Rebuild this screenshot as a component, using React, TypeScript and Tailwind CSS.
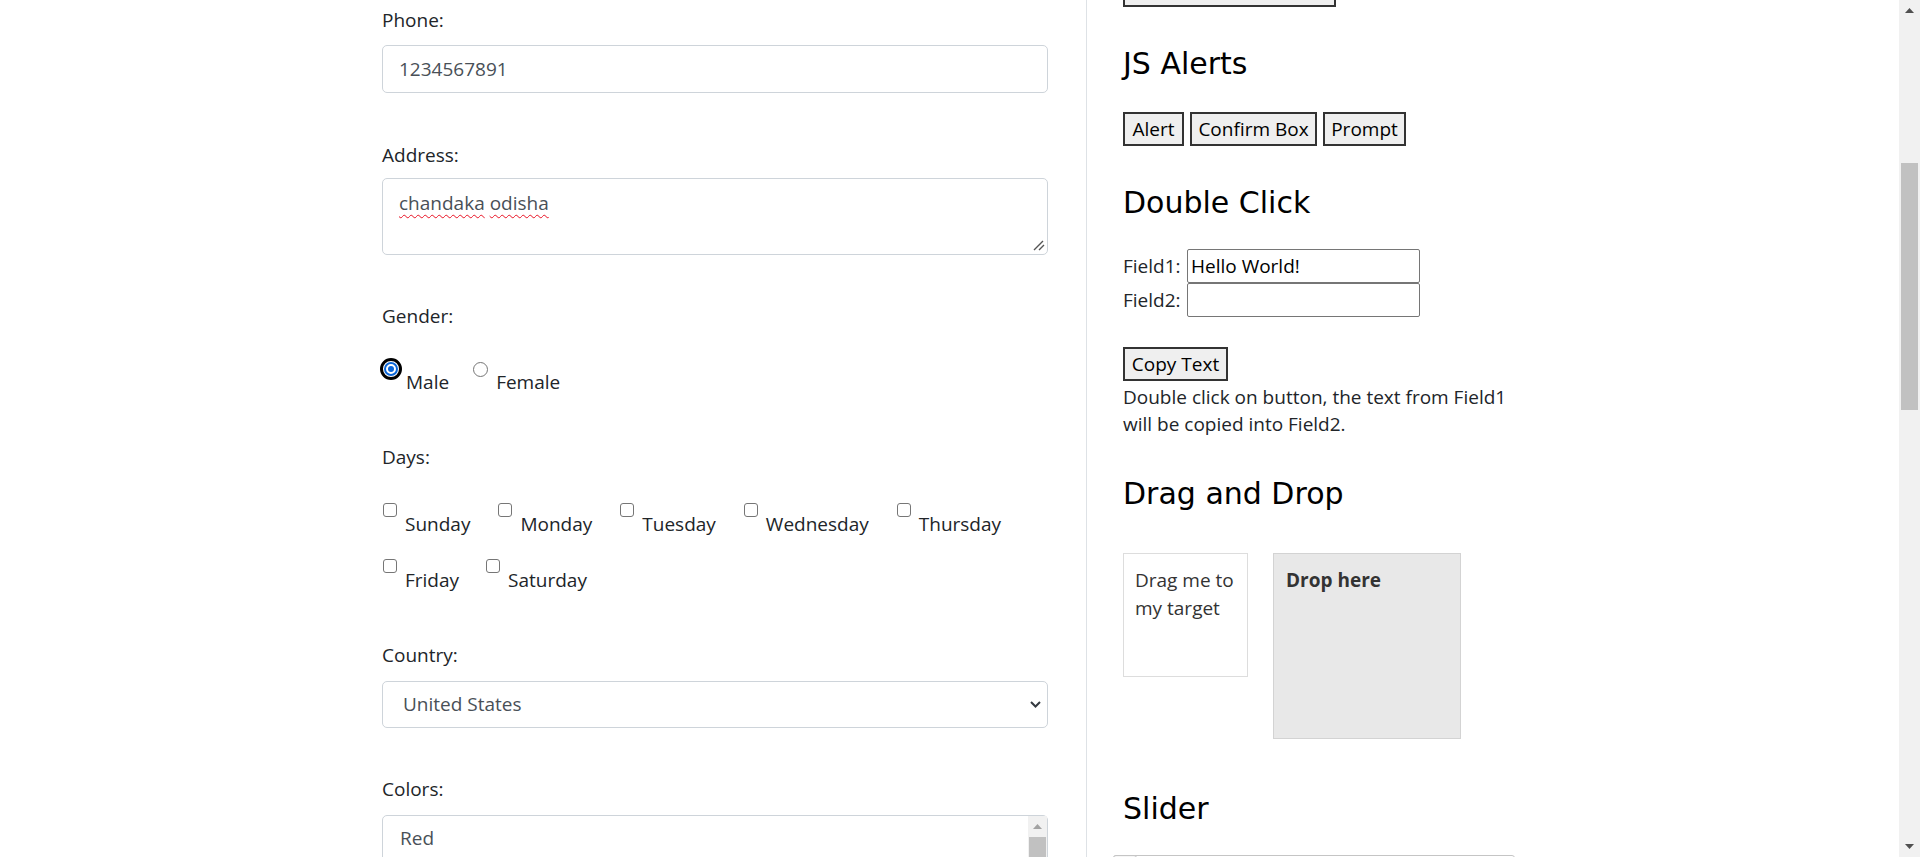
import React from 'react';

const sans = "font-['Segoe_UI','Open_Sans',sans-serif]";
const heading = "font-['DejaVu_Sans',Verdana,sans-serif] text-[30px] leading-[36px] text-black";

function Label({ children, className = '' }: { children: React.ReactNode; className?: string }) {
  return <div className={`text-[19px] leading-[30px] text-[#212529] ${className}`}>{children}</div>;
}

function CheckItem({ label }: { label: string }) {
  return (
    <div className="flex items-start">
      <span className="ml-[1px] h-[14px] w-[14px] rounded-[3px] border border-[#767676] bg-white" />
      <span className="ml-[8px] mt-[6px] text-[19px] leading-[30px] text-[#212529]">{label}</span>
    </div>
  );
}

function LeftForm() {
  return (
    <div className="w-[1086px] shrink-0 pl-[382px] pr-[38px] pt-[5px]">
      {/* Phone */}
      <Label>Phone:</Label>
      <div className="mt-[10px] flex h-[48px] items-center rounded-[5px] border border-[#ced4da] px-[16px] text-[19px] text-[#495057]">
        1234567891
      </div>

      {/* Address */}
      <Label className="mt-[47px]">Address:</Label>
      <div className="relative mt-[8px] h-[77px] rounded-[5px] border border-[#ced4da] px-[16px] pt-[9px] text-[19px] leading-[30px] text-[#495057]">
        <span className="underline decoration-[#e81123] decoration-wavy decoration-1 underline-offset-[4px]">chandaka</span>{' '}
        <span className="underline decoration-[#e81123] decoration-wavy decoration-1 underline-offset-[4px]">odisha</span>
        <svg className="absolute bottom-[3px] right-[2px]" width="12" height="11" viewBox="0 0 12 11">
          <path d="M1 10 L10 1 M6 10 L11 5" stroke="#555" strokeWidth="1.4" fill="none" />
        </svg>
      </div>

      {/* Gender */}
      <Label className="mt-[46px]">Gender:</Label>
      <div className="mt-[27px] flex items-start">
        <div className="flex items-start">
          <span className="-ml-[2px] flex h-[22px] w-[22px] items-center justify-center rounded-full border-[3px] border-black bg-white">
            <span className="flex h-[14px] w-[14px] items-center justify-center rounded-full border-2 border-[#0a66d8] bg-white">
              <span className="h-[6px] w-[6px] rounded-full bg-[#0a66d8]" />
            </span>
          </span>
          <span className="ml-[4px] mt-[9px] text-[19px] leading-[30px] text-[#212529]">Male</span>
        </div>
        <div className="ml-[24px] flex items-start">
          <span className="mt-[4px] h-[15px] w-[15px] rounded-full border border-[#767676] bg-white" />
          <span className="ml-[8px] mt-[9px] text-[19px] leading-[30px] text-[#212529]">Female</span>
        </div>
      </div>

      {/* Days */}
      <Label className="mt-[45px]">Days:</Label>
      <div className="mt-[31px] flex gap-x-[27px]">
        <CheckItem label="Sunday" />
        <CheckItem label="Monday" />
        <CheckItem label="Tuesday" />
        <CheckItem label="Wednesday" />
        <CheckItem label="Thursday" />
      </div>
      <div className="mt-[20px] flex gap-x-[26px]">
        <CheckItem label="Friday" />
        <CheckItem label="Saturday" />
      </div>

      {/* Country */}
      <Label className="mt-[45px]">Country:</Label>
      <div className="mt-[11px] flex h-[47px] items-center justify-between rounded-[5px] border border-[#ced4da] pl-[20px] pr-[6px] text-[19px] text-[#495057]">
        <span>United States</span>
        <svg width="11" height="7" viewBox="0 0 11 7">
          <path d="M1 1 L5.5 5.5 L10 1" stroke="#343a40" strokeWidth="2" fill="none" />
        </svg>
      </div>

      {/* Colors */}
      <Label className="mt-[46px]">Colors:</Label>
      <div className="mt-[11px] flex h-[140px] rounded-t-[5px] border border-[#ced4da]">
        <div className="flex-1 pl-[17px] pt-[7px] text-[19px] leading-[30px] text-[#495057]">Red</div>
        <div className="flex w-[19px] flex-col bg-[#f1f1f1]">
          <div className="flex h-[21px] items-center justify-center">
            <svg width="9" height="5" viewBox="0 0 9 5">
              <path d="M0 5 L4.5 0 L9 5 Z" fill="#a3a3a3" />
            </svg>
          </div>
          <div className="mx-[1px] h-[80px] bg-[#c1c1c1]" />
        </div>
      </div>
    </div>
  );
}

function OldButton({ children, className = '' }: { children?: React.ReactNode; className?: string }) {
  return (
    <button
      type="button"
      className={`flex h-[34px] items-center justify-center border-2 border-[#333] bg-[#efefef] text-[19px] text-black ${className}`}
    >
      {children}
    </button>
  );
}

function RightPanel() {
  return (
    <div className="flex-1 border-l border-[#dee2e6] pl-[36px]">
      <OldButton className="-mt-[27px] w-[213px]" />

      <h2 className={`mt-[39px] ${heading}`}>JS Alerts</h2>
      <div className="mt-[30px] flex gap-[6px]">
        <OldButton className="w-[61px]">Alert</OldButton>
        <OldButton className="w-[127px]">Confirm Box</OldButton>
        <OldButton className="w-[83px]">Prompt</OldButton>
      </div>

      <h2 className={`mt-[39px] ${heading}`}>Double Click</h2>
      <div className="mt-[28px] flex flex-col">
        <div className="flex items-center">
          <span className="w-[64px] text-[19px] text-[#212529]">Field1:</span>
          <div className="flex h-[34px] w-[233px] items-center rounded-[2px] border border-[#767676] px-[3px] text-[19px] text-black">
            Hello World!
          </div>
        </div>
        <div className="flex items-center">
          <span className="w-[64px] text-[19px] text-[#212529]">Field2:</span>
          <div className="h-[34px] w-[233px] rounded-[2px] border border-[#767676]" />
        </div>
      </div>
      <OldButton className="mt-[30px] w-[105px]">Copy Text</OldButton>
      <p className="mt-[3px] whitespace-nowrap text-[19px] leading-[27px] text-[#212529]">
        Double click on button, the text from Field1
        <br />
        will be copied into Field2.
      </p>

      <h2 className={`mt-[38px] ${heading}`}>Drag and Drop</h2>
      <div className="mt-[41px] flex items-start gap-[25px]">
        <div className="h-[124px] w-[125px] border border-[#dddddd] pl-[11px] pr-[2px] pt-[12px] text-[19px] leading-[28px] text-[#333]">
          Drag me to my target
        </div>
        <div className="h-[186px] w-[188px] border border-[#d3d3d3] bg-[#e8e8e8] px-[12px] pt-[12px] text-[19px] font-bold leading-[28px] text-[#333]">
          Drop here
        </div>
      </div>

      <h2 className={`mt-[52px] ${heading}`}>Slider</h2>
      <div className="relative -ml-[10px] mt-[28px] h-[30px] w-[402px]">
        <div className="mt-[5px] h-[14px] rounded-[3px] border border-[#c5c5c5] bg-white" />
        <div className="absolute left-0 top-0 h-[24px] w-[24px] rounded-[3px] border border-[#c5c5c5] bg-[#f6f6f6]" />
      </div>
    </div>
  );
}

function PageScrollbar() {
  return (
    <div className="flex h-full w-[21px] shrink-0 flex-col bg-[#f1f1f1]">
      <div className="flex h-[21px] items-center justify-center">
        <svg width="9" height="5" viewBox="0 0 9 5">
          <path d="M0 5 L4.5 0 L9 5 Z" fill="#505050" />
        </svg>
      </div>
      <div className="ml-[2px] mr-[2px] mt-[142px] h-[247px] bg-[#c1c1c1]" />
      <div className="flex-1" />
      <div className="flex h-[21px] items-center justify-center">
        <svg width="9" height="5" viewBox="0 0 9 5">
          <path d="M0 0 L9 0 L4.5 5 Z" fill="#505050" />
        </svg>
      </div>
    </div>
  );
}

export default function App() {
  return (
    <div className={`flex h-[857px] w-full overflow-hidden bg-white ${sans}`}>
      <div className="flex min-w-0 flex-1">
        <LeftForm />
        <RightPanel />
      </div>
      <PageScrollbar />
    </div>
  );
}
